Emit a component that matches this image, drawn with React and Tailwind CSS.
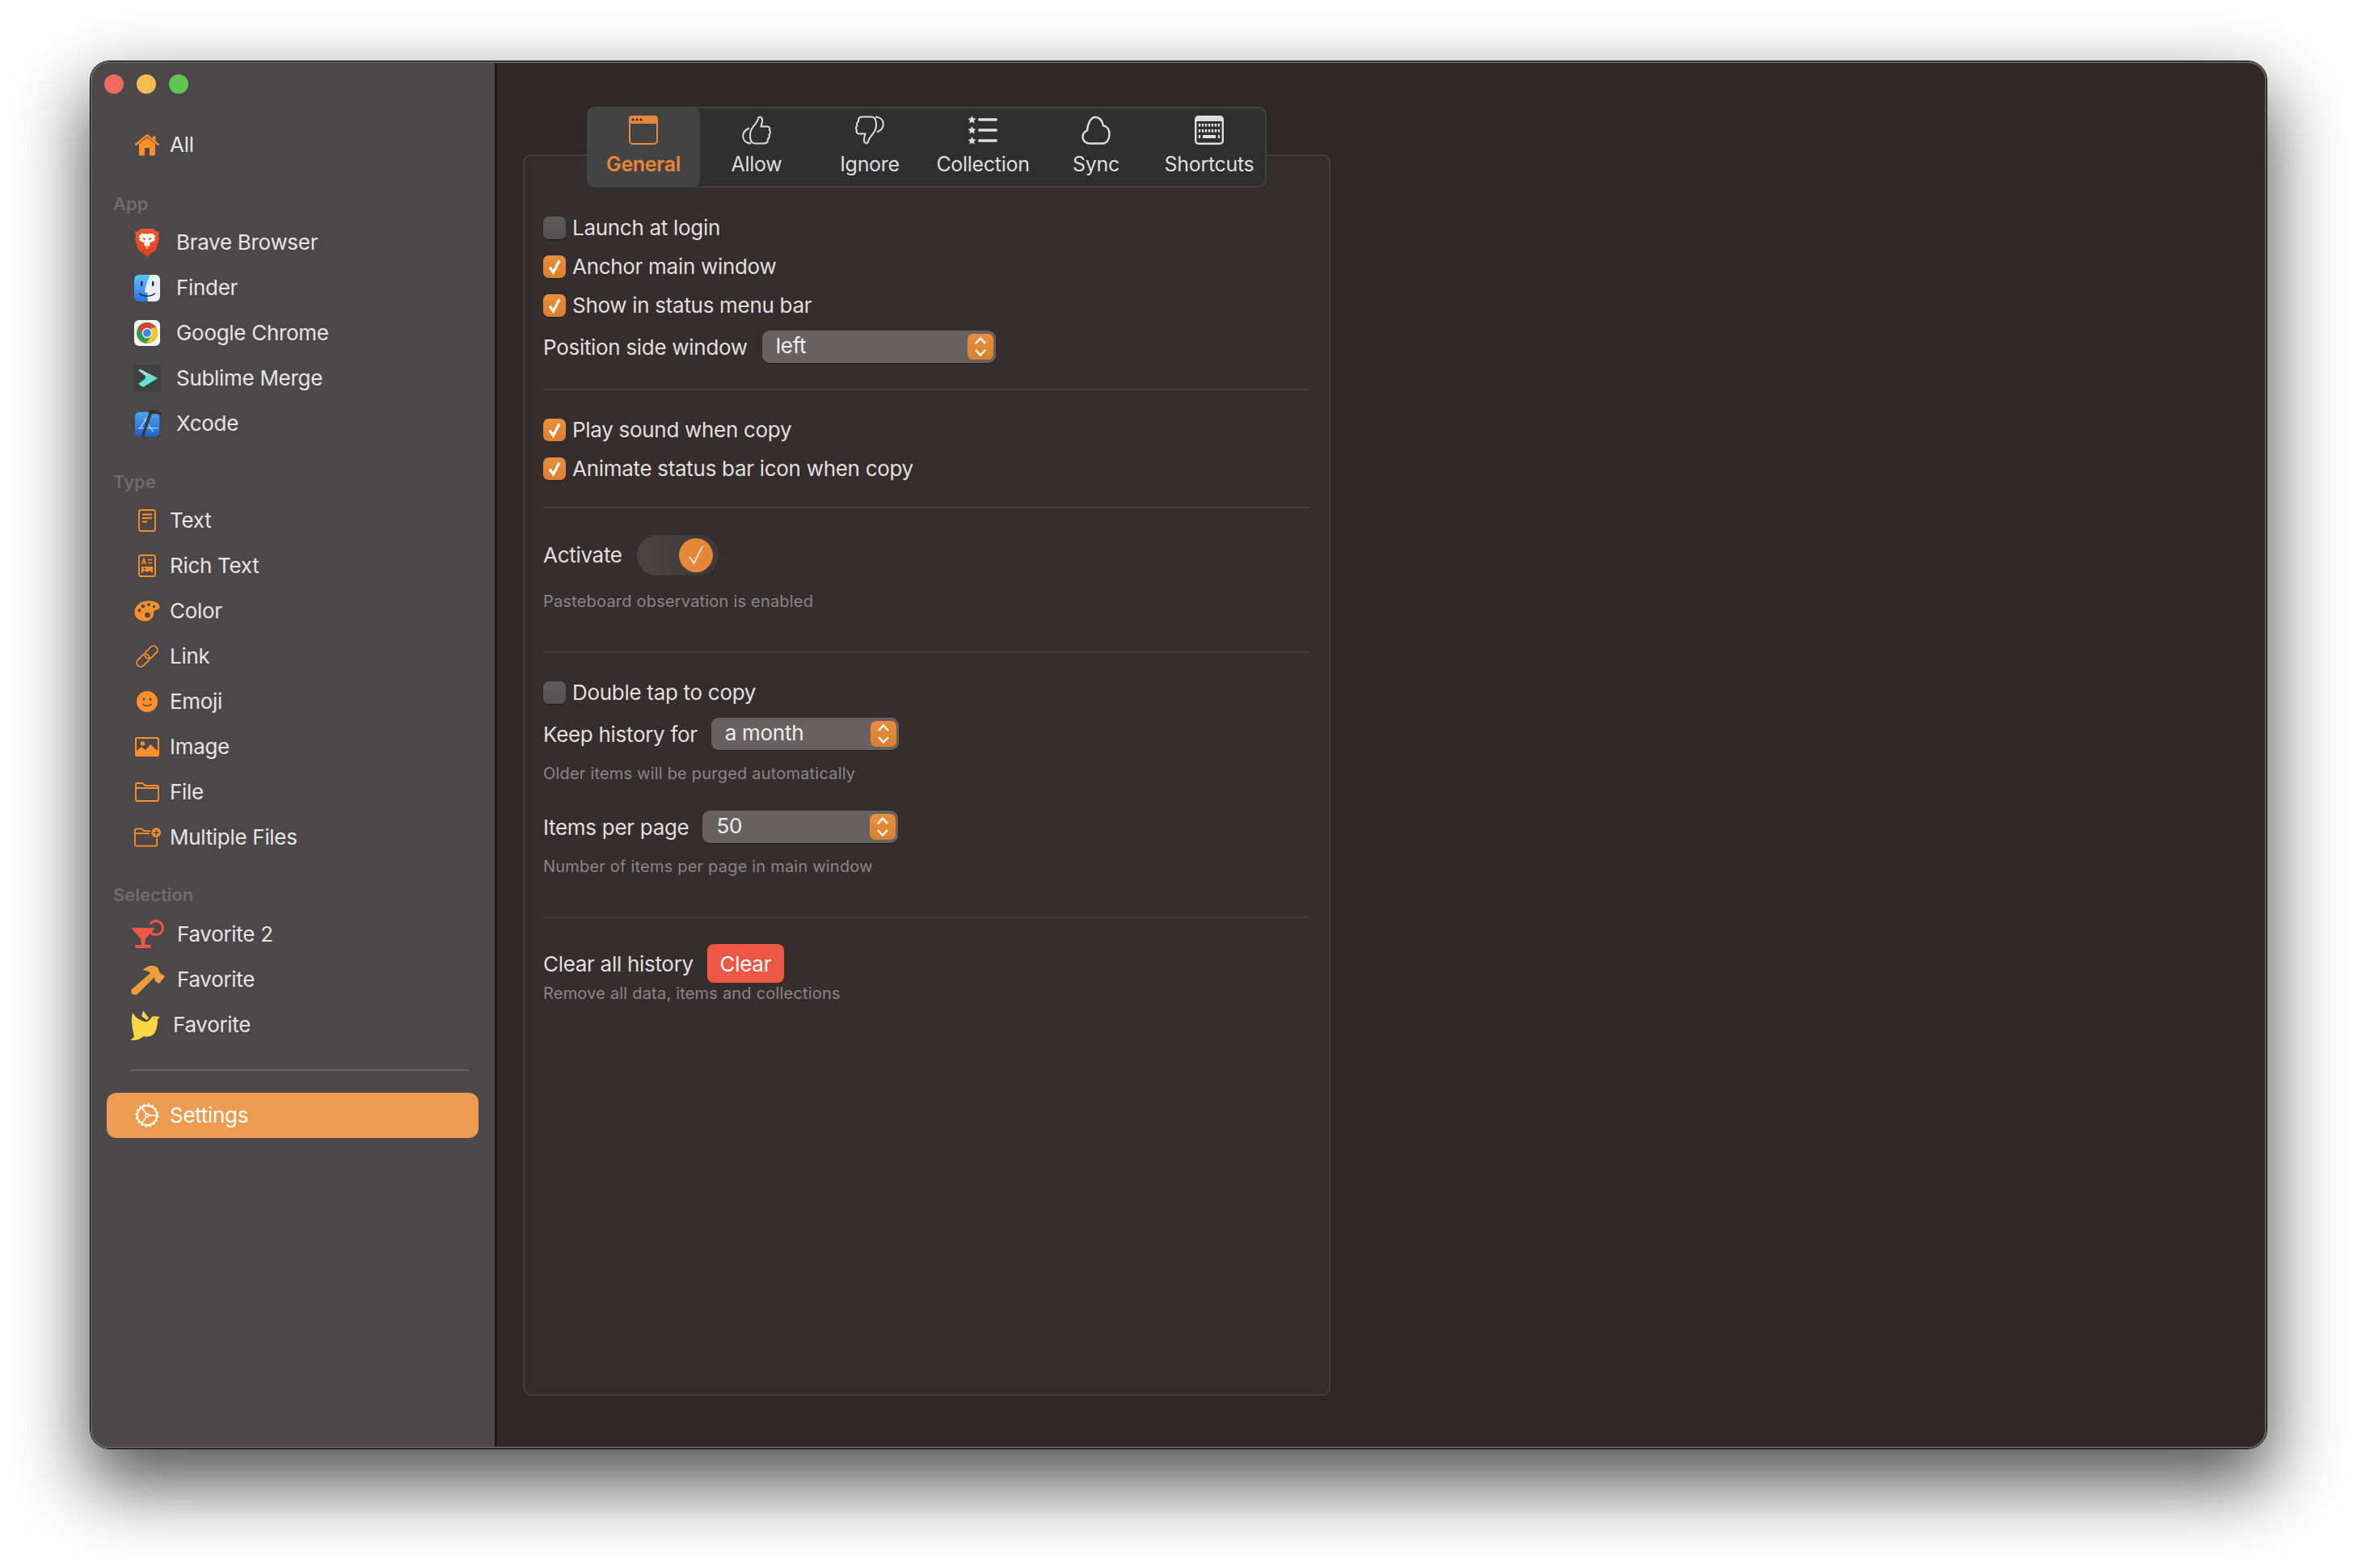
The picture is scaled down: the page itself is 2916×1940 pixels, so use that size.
import React from "react";

const ORANGE = "#fe8f2a";

const House = () => (
  <svg width="32" height="28" viewBox="0 0 32 28">
    <path fillRule="evenodd" fill={ORANGE} d="M6 13 16 5l10 8v12.500a2 2 0 0 1-2 2H8a2 2 0 0 1-2-2zM13 18v9.500h6V18z" />
    <path d="M1.500 14.500 16 2.200l14.500 12.300" fill="none" stroke={ORANGE} strokeWidth="2.400" />
    <rect x="23" y="3.500" width="3.400" height="7" fill={ORANGE} />
  </svg>
);

const Brave = () => (
  <svg width="32" height="36" viewBox="0 0 32 36">
    <defs>
      <linearGradient id="brv" x1="0" y1="0" x2="0" y2="1">
        <stop offset="0" stopColor="#f1562b" />
        <stop offset="1" stopColor="#e0431d" />
      </linearGradient>
    </defs>
    <path fill="url(#brv)" d="M8 1h16l3 3 4 1-1 5 1 3-4 14-8 6-3 3-3-3-8-6L1 13l1-3-1-5 4-1z" />
    <path fill="#fff" d="M9 7h5l2 1 2-1h5l3 3-1 3 1 2-5 3-2-1 1 3-1 2-2 3-1 1-1-1-2-3-1-2 1-3-2 1-5-3 1-2-1-3z" />
    <path fill="#e9491f" d="M10 12l4 1 0 2-3-1zM22 12l-4 1 0 2 3-1zM13 22l3 1 3-1-3 3z" />
  </svg>
);

const Finder = () => (
  <svg width="32" height="33" viewBox="0 0 32 33">
    <defs>
      <linearGradient id="fnd" x1="0" y1="0" x2="0" y2="1">
        <stop offset="0" stopColor="#5cc4fa" />
        <stop offset="1" stopColor="#2b6fe8" />
      </linearGradient>
    </defs>
    <rect width="32" height="33" rx="6" fill="url(#fnd)" />
    <path fill="#e6edf3" d="M20 0h6a6 6 0 0 1 6 6v21a6 6 0 0 1-6 6H17c-.6-4-.8-7-.6-11H13c.6-8 3.500-15 7-22z" />
    <rect x="8" y="8" width="2.400" height="6" rx="1.200" fill="#123" />
    <rect x="22" y="8" width="2.400" height="6" rx="1.200" fill="#123" />
    <path d="M6 23c6 4.500 14 4.500 20 0" fill="none" stroke="#123" strokeWidth="1.400" />
  </svg>
);

const Chrome = () => (
  <svg width="32" height="32" viewBox="0 0 32 32">
    <rect width="32" height="32" rx="6" fill="#f4f4f4" />
    <circle cx="16" cy="16" r="13" fill="#2f9e50" />
    <path fill="#d8432f" d="M16 3a13 13 0 0 1 11.300 6.500H16l-5.600 8.500L5 9a13 13 0 0 1 11-6z" />
    <path fill="#f7c52b" d="M27.300 9.500A13 13 0 0 1 15 29l6-9V9.500z" />
    <circle cx="16" cy="16" r="6.300" fill="#f4f4f4" />
    <circle cx="16" cy="16" r="4.900" fill="#4a86e8" />
  </svg>
);

const Sublime = () => (
  <svg width="34" height="34" viewBox="0 0 34 34">
    <rect width="34" height="34" rx="2" fill="#3f4242" />
    <path fill="#a4dfd9" d="M6 7l3-1 21 11-9 2z" />
    <path fill="#5fe2d8" d="M16 13l14 4-18 11-6-4 8-6z" />
  </svg>
);

const Xcode = () => (
  <svg width="36" height="38" viewBox="0 0 36 38" className="translate-x-[2px]">
    <defs>
      <linearGradient id="xc" x1="0" y1="0" x2="0" y2="1">
        <stop offset="0" stopColor="#4aa5ee" />
        <stop offset="1" stopColor="#1e62d0" />
      </linearGradient>
    </defs>
    <rect x="0" y="4" width="32" height="32" rx="6" fill="url(#xc)" />
    <path d="M6 26 18 8M12 12l12 18M4 25h26" fill="none" stroke="#a9d3f7" strokeWidth="1.200" />
    <path d="M21 3 10 36" stroke="#3b3a3c" strokeWidth="4" />
    <path fill="#333" d="M17 3c5-3 11-3 18 3l-1 3c-5-3-9-3-11-2z" />
  </svg>
);

const DocText = () => (
  <svg width="22" height="28" viewBox="0 0 22 28" fill="none" stroke={ORANGE}>
    <rect x="1" y="1" width="20" height="26" rx="2.500" strokeWidth="1.800" />
    <path d="M5 6.500h12M5 11h12M5 15.500h6" strokeWidth="1.800" />
  </svg>
);

const DocRich = () => (
  <svg width="22" height="28" viewBox="0 0 22 28" fill="none" stroke={ORANGE}>
    <rect x="1" y="1" width="20" height="26" rx="2.500" strokeWidth="1.800" />
    <path d="M4.500 12 7 5l2.500 7M5.500 10h3M12 6.500h5M12 10.500h5" strokeWidth="1.400" />
    <path fill={ORANGE} stroke="none" d="M4 15h14v8l-4-3-3 2-3-2-4 3z" />
    <circle cx="8" cy="17.500" r="1.300" fill="#4c4849" stroke="none" />
  </svg>
);

const Palette = () => (
  <svg width="32" height="26" viewBox="0 0 32 26">
    <path fill={ORANGE} d="M17 .5C26 .5 31.500 3 31.500 8c0 4-5 3-7 5-1.500 1.500 0 3-.5 5-.7 4-5 7.500-10 7.500C6 25.500.5 21 .5 14 .5 6.500 8 .5 17 .5z" />
    <g fill="#4c4849">
      <circle cx="6.500" cy="12" r="2" />
      <circle cx="11" cy="7" r="2.300" />
      <circle cx="18" cy="5" r="2" />
      <circle cx="24.500" cy="7.500" r="1.700" />
      <circle cx="16.500" cy="18" r="3.300" />
    </g>
  </svg>
);

const LinkIcon = () => (
  <svg width="28" height="28" viewBox="0 0 28 28" fill="none" stroke={ORANGE} strokeWidth="1.800">
    <rect x="-9" y="-5" width="18" height="10" rx="5" transform="translate(9 19) rotate(-45)" />
    <rect x="-9" y="-5" width="18" height="10" rx="5" transform="translate(19 9) rotate(-45)" />
  </svg>
);

const Smile = () => (
  <svg width="26" height="26" viewBox="0 0 26 26">
    <circle cx="13" cy="13" r="13" fill={ORANGE} />
    <circle cx="9" cy="10" r="1.500" fill="#4c4849" />
    <circle cx="17" cy="10" r="1.500" fill="#4c4849" />
    <path d="M7.500 16c3 3 8 3 11 0" fill="none" stroke="#4c4849" strokeWidth="1.400" />
  </svg>
);

const ImageIcon = () => (
  <svg width="30" height="24" viewBox="0 0 30 24">
    <path fillRule="evenodd" fill={ORANGE} d="M2.500 0h25A2.500 2.500 0 0 1 30 2.500v19a2.500 2.500 0 0 1-2.500 2.500h-25A2.500 2.500 0 0 1 0 21.500v-19A2.500 2.500 0 0 1 2.500 0zM2 2v15l6-5 5 4 6-7 9 8V2z" />
    <circle cx="9.500" cy="8" r="2.800" fill={ORANGE} />
  </svg>
);

const Folder = () => (
  <svg width="30" height="24" viewBox="0 0 30 24" fill="none" stroke={ORANGE} strokeWidth="1.800">
    <path d="M1 6V3a2 2 0 0 1 2-2h6.500l3 3H27a2 2 0 0 1 2 2v15a2 2 0 0 1-2 2H3a2 2 0 0 1-2-2zM1 7h28" />
  </svg>
);

const FolderPlus = () => (
  <svg width="35" height="24" viewBox="0 0 35 24" className="translate-x-[1px]">
    <path fill="none" stroke={ORANGE} strokeWidth="1.800" d="M1 6V3a2 2 0 0 1 2-2h6.500l3 3H21M1 7h19M29 13v8a2 2 0 0 1-2 2H3a2 2 0 0 1-2-2V6" />
    <circle cx="28" cy="6" r="6" fill={ORANGE} />
    <path d="M28 2.500v7M24.500 6h7" stroke="#4c4849" strokeWidth="1.500" />
  </svg>
);

const Martini = () => (
  <svg width="42" height="36" viewBox="0 0 42 36">
    <path fill="#ee5646" d="M0 10h30l-12.500 14v7H25v1.500l-1 2.500H6l-1-2.500V31h7.500v-7z" />
    <circle cx="31" cy="10" r="8.500" fill="none" stroke="#ee5646" strokeWidth="3" strokeDasharray="45 8.400" strokeDashoffset="-31.150" />
  </svg>
);

const Hammer = () => (
  <svg width="42" height="37" viewBox="0 0 42 37">
    <path fill="#ef9f38" d="M24 10 29 15 9 35c-2 2-5 2-7 1-2-1-2-4-1-6z" />
    <path fill="#ef9f38" d="M15 6c5-5 12-7 18-3l3 7 6 4-7 9-5-3-1-5-5-5c-3-3-6-3-9-4z" />
  </svg>
);

const Bird = () => (
  <svg width="37" height="37" viewBox="0 0 37 37">
    <path fill="#fbd844" d="M2 3c3 5 8 9 15 11 3 1 6-1 9-6 2-1 5-1 7 0l3 0-3 3c0 9-2 17-7 20-4 2-8 2-10 1-4 3-8 5-12 5-2 0-4 0-4-1l4-3C3 26-1 14 2 3z" />
    <path fill="#fbd844" d="M15 0c2 3 5 7 7 9l-2 3c-3-2-5-3-7-5 1-2 2-5 2-7z" />
    <circle cx="29" cy="10.500" r=".7" fill="#4c4849" />
  </svg>
);

const Gear = () => (
  <svg width="30" height="30" viewBox="0 0 30 30" fill="none" stroke="#fff">
    <circle cx="15" cy="15" r="12" strokeWidth="1.800" />
    <circle cx="15" cy="15" r="13.300" strokeWidth="2.400" strokeDasharray="2.600 2.620" />
    <circle cx="15" cy="15" r="2" strokeWidth="1.400" />
    <path d="M17 15h9.500M14 13.300 8.500 5.500M14 16.700 8.500 24.500" strokeWidth="1.600" />
  </svg>
);

const WindowIcon = () => (
  <svg width="36" height="36" viewBox="0 0 36 36">
    <rect x="1" y="1" width="34" height="34" rx="4" fill="none" stroke="#e8873a" strokeWidth="2" />
    <path fill="#e8873a" d="M4 0h28a4 4 0 0 1 4 4v6H0V4a4 4 0 0 1 4-4z" />
    <g fill="#2f2a2a">
      <circle cx="5" cy="5" r="1.500" />
      <circle cx="10" cy="5" r="1.500" />
      <circle cx="15" cy="5" r="1.500" />
    </g>
  </svg>
);

const THUMB = "M13 15C16 11 19 8 20 4 20.500 1 24.500 1 25 5 25.500 8 24 11 23.500 13.500H31C34 13.500 35 16 34 18 35.500 20 35 22.500 33.500 23.500 34.500 25.500 33.500 28 32 28.500 32.500 31.500 31 34.500 27.500 34.500H16C12.500 34.500 10 32 10 25 10 20 11 17.500 13 15ZM9 15.500C4 17.500 1.200 21 1.200 25.500 1.200 30.500 5 34 11 34.500";

const ThumbUp = () => (
  <svg width="36" height="36" viewBox="0 0 36 36" fill="none" stroke="#dedede" strokeWidth="2">
    <path d={THUMB} />
  </svg>
);

const ThumbDown = () => (
  <svg width="36" height="36" viewBox="0 0 36 36" fill="none" stroke="#dedede" strokeWidth="2">
    <path d={THUMB} transform="rotate(180 18 18)" />
  </svg>
);

const ListStar = () => (
  <svg width="36" height="36" viewBox="0 0 36 36" fill="#dedede">
    {[5, 18, 31].map((y) => (
      <g key={y} transform={`translate(4.500 ${y})`}>
        <path d="M0-5 1.500-1.700 5-1.300 2.400 1 3.200 4.500 0 2.700-3.200 4.500-2.400 1-5-1.300-1.500-1.700z" />
        <rect x="7.500" y="-1.700" width="24" height="3.400" rx="1.700" />
      </g>
    ))}
  </svg>
);

const Cloud = () => (
  <svg width="36" height="36" viewBox="0 0 36 36" fill="none" stroke="#dedede" strokeWidth="2.400">
    <path d="M10 34.500C5 34.500 1.500 31 1.500 26.500 1.500 23 3.500 20 7 18.500 7.500 10 11.500 2 17 2 22 2 25.500 6 27 12.500 31.500 13 34.500 17 34.500 23 34.500 30 31 34.500 26 34.500Z" />
  </svg>
);

const Keyboard = () => (
  <svg width="36" height="36" viewBox="0 0 36 36" fill="#dedede">
    <rect x="1.200" y="1.200" width="33.600" height="33.600" rx="3.500" fill="none" stroke="#dedede" strokeWidth="2.400" />
    <path d="M2 2h32v5H2z" />
    {[10, 17].map((y) =>
      [6, 10, 14, 18, 22, 26, 30].map((x) => <rect key={`${x}-${y}`} x={x - 1.200} y={y} width="2.400" height="3.600" />)
    )}
    <rect x="4.800" y="24" width="2.400" height="4" />
    <rect x="28.800" y="24" width="2.400" height="4" />
    <rect x="10" y="24" width="16" height="4" />
  </svg>
);

const Chevrons = () => (
  <svg width="16" height="26" viewBox="0 0 16 26" fill="none" stroke="#fff" strokeWidth="2.400">
    <path d="M2 9 8 2.500 14 9M2 17l6 6.500 6-6.500" />
  </svg>
);

const APPS = [
  { label: "Brave Browser", icon: <Brave /> },
  { label: "Finder", icon: <Finder /> },
  { label: "Google Chrome", icon: <Chrome /> },
  { label: "Sublime Merge", icon: <Sublime /> },
  { label: "Xcode", icon: <Xcode /> },
];

const TYPES = [
  { label: "Text", icon: <DocText /> },
  { label: "Rich Text", icon: <DocRich /> },
  { label: "Color", icon: <Palette /> },
  { label: "Link", icon: <LinkIcon /> },
  { label: "Emoji", icon: <Smile /> },
  { label: "Image", icon: <ImageIcon /> },
  { label: "File", icon: <Folder /> },
  { label: "Multiple Files", icon: <FolderPlus /> },
];

const TABS = [
  { label: "General", icon: <WindowIcon />, active: true },
  { label: "Allow", icon: <ThumbUp /> },
  { label: "Ignore", icon: <ThumbDown /> },
  { label: "Collection", icon: <ListStar /> },
  { label: "Sync", icon: <Cloud /> },
  { label: "Shortcuts", icon: <Keyboard /> },
];

const SideRow = ({ icon, label, iconClass, textClass }) => (
  <div className="flex h-14 items-center text-[26px] tracking-[-0.3px] text-[#e6e4e4]">
    <div className={`flex shrink-0 items-center justify-center ${iconClass}`}>{icon}</div>
    <span className={`-translate-y-[1px] ${textClass}`}>{label}</span>
  </div>
);

const SideHeader = ({ children, className }) => (
  <div className={`ml-[28px] flex h-7 -translate-y-[1px] items-center text-[22px] font-semibold text-[#6f6c6d] ${className}`}>{children}</div>
);

const Label = ({ children, className = "" }) => <span className={`-translate-y-[1px] ${className}`}>{children}</span>;

const Checkbox = ({ label, checked }) => (
  <div className="flex h-12 items-center">
    <div
      className={`flex h-7 w-7 items-center justify-center rounded-[7px] shadow-[0_1px_1px_rgba(0,0,0,0.35)] ${
        checked ? "bg-linear-to-b from-[#ec8f3c] to-[#d97f30]" : "bg-linear-to-b from-[#5f5a5b] to-[#545051]"
      }`}
    >
      {checked && (
        <svg width="18" height="20" viewBox="0 0 18 20" fill="none" stroke="#fff" strokeWidth="3.200">
          <path d="M3 10.500 7.500 17 15 2.500" />
        </svg>
      )}
    </div>
    <Label className="ml-2">{label}</Label>
  </div>
);

const Select = ({ value, width, pad, className }) => (
  <div
    className={`flex h-10 -translate-y-[1px] items-center justify-between rounded-[9px] bg-[#676261] pr-[3px] shadow-[0_1px_1px_rgba(0,0,0,0.3)] ${width} ${pad} ${className}`}
  >
    <span className="pb-1 text-[#efeded]">{value}</span>
    <div className="flex h-8 w-8 items-center justify-center rounded-[7px] bg-linear-to-b from-[#ec8f3c] to-[#d97f30]">
      <Chevrons />
    </div>
  </div>
);

const Caption = ({ children, className }) => (
  <div className={`flex h-7 items-center text-[20px] tracking-[0.2px] text-[#8a8586] ${className}`}>{children}</div>
);

const Divider = ({ className }) => <div className={`h-0.5 bg-[#463e3f] ${className}`} />;

export default function App() {
  return (
    <div className="min-h-[1940px] bg-white pt-[75px] pl-[111px] font-['Inter',sans-serif]">
      <div className="relative flex h-[1718px] w-[2694px] overflow-hidden rounded-[24px] border border-black shadow-[0_40px_90px_4px_rgba(0,0,0,0.68)]">
        {/* Sidebar */}
        <aside className="w-[503px] shrink-0 border-r-[3px] border-[#1c1718] bg-[#4c4849]">
          <div className="ml-[17px] flex h-[75px] gap-4 pt-4">
            <div className="h-6 w-6 rounded-full bg-[#ee6a5f]" />
            <div className="h-6 w-6 rounded-full bg-[#f5bd4f]" />
            <div className="h-6 w-6 rounded-full bg-[#61c554]" />
          </div>
          <SideRow icon={<House />} label="All" iconClass="ml-[53px] w-[34px]" textClass="ml-[11px]" />
          <SideHeader className="mt-8 mb-[5px]">App</SideHeader>
          {APPS.map((a) => (
            <SideRow key={a.label} icon={a.icon} label={a.label} iconClass="ml-[53px] w-[34px]" textClass="ml-[19px]" />
          ))}
          <SideHeader className="mt-[31px] mb-[5px]">Type</SideHeader>
          {TYPES.map((t) => (
            <SideRow key={t.label} icon={t.icon} label={t.label} iconClass="ml-[53px] w-[34px]" textClass="ml-[11px]" />
          ))}
          <SideHeader className="mt-[30px] mb-1.5">Selection</SideHeader>
          <SideRow icon={<Martini />} label="Favorite 2" iconClass="ml-[50px] w-[42px]" textClass="ml-[15px]" />
          <SideRow icon={<Hammer />} label="Favorite" iconClass="ml-[50px] w-[42px]" textClass="ml-[15px]" />
          <SideRow icon={<Bird />} label="Favorite" iconClass="ml-[50px] w-[37px]" textClass="ml-[15px]" />
          <div className="mt-[27px] ml-[50px] h-0.5 w-[418px] bg-[#686465]" />
          <div className="mt-[27px] ml-5 flex h-14 w-[460px] items-center rounded-xl bg-[#ec9b50] text-[26px] tracking-[-0.3px] text-white">
            <div className="ml-[35px] flex w-[43px] items-center">
              <Gear />
            </div>
            <span className="-translate-y-[1px]">Settings</span>
          </div>
        </aside>

        {/* Main */}
        <main className="flex-1 bg-[#2f2728] pt-14 pl-8 text-[26px] tracking-[-0.3px] text-[#e2dfdf]">
          <div className="relative z-10 ml-[79px] flex h-[100px] w-[841px] overflow-hidden rounded-[10px] bg-[#2f2f2f] shadow-[inset_0_0_0_2px_#454040]">
            {TABS.map((t) => (
              <div
                key={t.label}
                className={`flex w-[140px] shrink-0 flex-col items-center pt-[11px] ${
                  t.active ? "rounded-[10px] bg-[#434343] font-semibold text-[#e8873a]" : "text-[#dedede]"
                }`}
              >
                {t.icon}
                <span className="mt-0.5 text-[25px] leading-[44px]">{t.label}</span>
              </div>
            ))}
          </div>

          <div className="-mt-[41px] h-[1536px] w-[999px] rounded-[10px] border-2 border-[#453d3e] bg-[#362d2e] pt-[65px] pr-6 pl-[23px]">
            <Checkbox label="Launch at login" />
            <Checkbox label="Anchor main window" checked />
            <Checkbox label="Show in status menu bar" checked />
            <div className="mt-1 flex h-12 items-center">
              <Label>Position side window</Label>
              <Select value="left" width="w-[289px]" pad="pl-[17px]" className="ml-[18px]" />
            </div>
            <Divider className="mt-[27px]" />

            <div className="mt-[25px]">
              <Checkbox label="Play sound when copy" checked />
              <Checkbox label="Animate status bar icon when copy" checked />
            </div>
            <Divider className="mt-[23px]" />

            <div className="mt-[33px] flex h-[50px] items-center">
              <Label>Activate</Label>
              <div className="ml-[18px] flex h-[50px] w-[101px] items-center justify-end rounded-full bg-linear-to-r from-[#4a4444] to-[#3e3738] pr-[7px]">
                <div className="flex h-[42px] w-[42px] items-center justify-center rounded-full bg-[#e8873a]">
                  <svg width="20" height="26" viewBox="0 0 20 26" fill="none" stroke="#fff" strokeWidth="1.600">
                    <path d="M2 15 7.500 23 18 2" />
                  </svg>
                </div>
              </div>
            </div>
            <Caption className="mt-[18px]">Pasteboard observation is enabled</Caption>
            <Divider className="mt-12" />

            <div className="mt-[25px]">
              <Checkbox label="Double tap to copy" />
            </div>
            <div className="mt-1 flex h-12 items-center">
              <Label>Keep history for</Label>
              <Select value="a month" width="w-[232px]" pad="pl-[17px]" className="ml-[17px]" />
            </div>
            <Caption className="mt-2.5">Older items will be purged automatically</Caption>
            <div className="mt-[29px] flex h-12 items-center">
              <Label>Items per page</Label>
              <Select value="50" width="w-[242px]" pad="pl-[17px]" className="ml-[17px]" />
            </div>
            <Caption className="mt-2.5">Number of items per page in main window</Caption>
            <Divider className="mt-12" />

            <div className="mt-[33px] flex h-12 items-center">
              <Label>Clear all history</Label>
              <div className="ml-[17px] flex h-12 w-[95px] -translate-y-[1px] items-center justify-center rounded-lg bg-[#ee5646] text-white">Clear</div>
            </div>
            <Caption className="-mt-0.5">Remove all data, items and collections</Caption>
          </div>
        </main>
        <div className="pointer-events-none absolute inset-0 rounded-[23px] shadow-[inset_0_0_0_2px_#655f5f]" />
      </div>
    </div>
  );
}
